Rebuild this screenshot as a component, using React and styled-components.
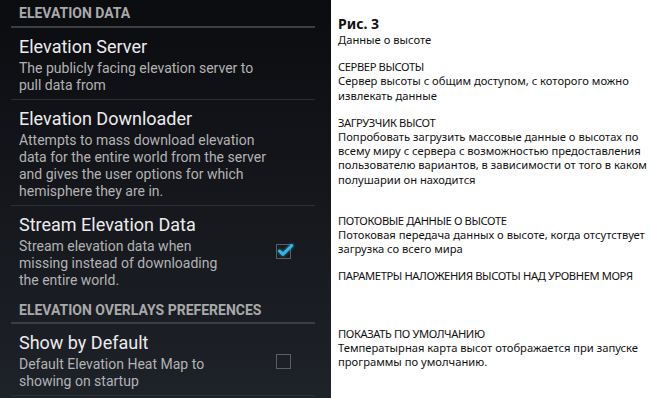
import React from 'react';
import styled, { createGlobalStyle } from 'styled-components';

const GlobalStyle = createGlobalStyle`
    html, body {
        margin: 0;
        padding: 0;
        background: #ffffff;
    }
`;

const Page = styled.div`
    display: flex;
    width: 651px;
    height: 398px;
    overflow: hidden;
`;

const Settings = styled.div`
    width: 331px;
    flex-shrink: 0;
    height: 100%;
    box-sizing: border-box;
    padding: 0 16px 0 11px;
    background: linear-gradient(180deg, #0b0c10 0%, #15171c 50%, #1e2229 100%);
    font-family: Roboto, "Noto Sans", sans-serif;
    overflow: hidden;
`;

const Category = styled.div`
    padding: ${p => (p.$spaced ? '7px 8px 3px' : '4px 8px 4px')};
    border-bottom: 2px solid #3b3e43;
    color: #a9a9a9;
    font-size: 14px;
    font-weight: 700;
    line-height: 18px;
`;

const Row = styled.div`
    display: flex;
    align-items: center;
    padding: 8px 24px 5px 8px;
    border-bottom: ${p => (p.$divider ? '1px solid #2c2f34' : 'none')};
`;

const RowText = styled.div`
    flex: 1;
    min-width: 0;
`;

const Title = styled.div`
    color: #ececec;
    font-size: 18px;
    line-height: 22px;
`;

const Summary = styled.div`
    margin-top: 2px;
    max-width: ${p => p.$width}px;
    color: #b3b3b3;
    font-size: 14px;
    line-height: 17px;
`;

const Box = styled.div`
    position: relative;
    width: 13px;
    height: 13px;
    border: 1px solid #5b5e64;
    flex-shrink: 0;
`;

const Tick = styled.svg`
    position: absolute;
    left: 1px;
    top: -1px;
    overflow: visible;
    filter: drop-shadow(0 0 1.5px rgba(51, 181, 229, 0.8));
`;

const Checkbox = ({ checked }) => (
    <Box>
        {checked && (
            <Tick width="15" height="12" viewBox="0 0 15 12">
                <path d="M1.5 7 L5 10.3 L13.8 1.5" fill="none" stroke="#33b5e5" strokeWidth="3" strokeLinecap="round" strokeLinejoin="round" />
            </Tick>
        )}
    </Box>
);

const Notes = styled.div`
    flex: 1;
    padding: 14px 0 0 7px;
    color: #111111;
    font-family: "Noto Sans", "DejaVu Sans", sans-serif;
    font-size: 11.2px;
    line-height: 14.2px;
    white-space: nowrap;
`;

const Caption = styled.div`
    font-weight: 700;
    font-size: 14px;
    line-height: 19px;
`;

const Note = styled.p`
    margin: ${p => p.$gap}px 0 0;
`;

const Heading = styled.span`
    display: block;
    font-size: 11.2px;
    letter-spacing: -0.4px;
`;

const Line = styled.span`
    display: block;
`;

const notes = [
    { gap: 13, heading: 'СЕРВЕР ВЫСОТЫ', lines: ['Сервер высоты с общим доступом, с которого можно', 'извлекать данные'] },
    {
        gap: 13,
        heading: 'ЗАГРУЗЧИК ВЫСОТ',
        lines: [
            'Попробовать загрузить массовые данные о высотах по',
            'всему миру с сервера с возможностью предоставления',
            'пользователю вариантов, в зависимости от того в каком',
            'полушарии он находится',
        ],
    },
    { gap: 27, heading: 'ПОТОКОВЫЕ ДАННЫЕ О ВЫСОТЕ', lines: ['Потоковая передача данных о высоте, когда отсутствует', 'загрузка со всего мира'] },
    { gap: 13, heading: 'ПАРАМЕТРЫ НАЛОЖЕНИЯ ВЫСОТЫ НАД УРОВНЕМ МОРЯ', lines: [] },
    { gap: 43, heading: 'ПОКАЗАТЬ ПО УМОЛЧАНИЮ', lines: ['Температырная карта высот отображается при запуске', 'программы по умолчанию.'] },
];

const prefs = [
    {
        title: 'Elevation Server',
        summary: 'The publicly facing elevation server to pull data from',
        width: 255,
    },
    {
        title: 'Elevation Downloader',
        summary: 'Attempts to mass download elevation data for the entire world from the server and gives the user options for which hemisphere they are in.',
        width: 255,
    },
];

const App = () => (
    <Page>
        <GlobalStyle />
        <Settings>
            <Category>ELEVATION DATA</Category>
            {prefs.map(p => (
                <Row key={p.title} $divider>
                    <RowText>
                        <Title>{p.title}</Title>
                        <Summary $width={p.width}>{p.summary}</Summary>
                    </RowText>
                </Row>
            ))}
            <Row>
                <RowText>
                    <Title>Stream Elevation Data</Title>
                    <Summary $width={210}>Stream elevation data when missing instead of downloading the entire world.</Summary>
                </RowText>
                <Checkbox checked />
            </Row>
            <Category $spaced>ELEVATION OVERLAYS PREFERENCES</Category>
            <Row $divider>
                <RowText>
                    <Title>Show by Default</Title>
                    <Summary $width={210}>Default Elevation Heat Map to showing on startup</Summary>
                </RowText>
                <Checkbox />
            </Row>
        </Settings>
        <Notes>
            <Caption>Рис. 3</Caption>
            <Note $gap={0}>Данные о высоте</Note>
            {notes.map(n => (
                <Note key={n.heading} $gap={n.gap}>
                    <Heading>{n.heading}</Heading>
                    {n.lines.map(l => <Line key={l}>{l}</Line>)}
                </Note>
            ))}
        </Notes>
    </Page>
);

export default App;
